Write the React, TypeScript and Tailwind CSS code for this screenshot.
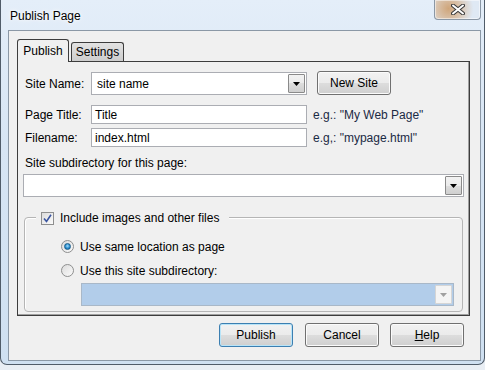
import type { ReactNode } from 'react';

const font = { fontFamily: '"Liberation Sans", Arial, sans-serif' };

function DropArrow({ disabled = false }: { disabled?: boolean }) {
  return (
    <svg width="7" height="4" viewBox="0 0 7 4">
      <path d="M0 0h7L3.5 4z" fill={disabled ? '#a0a0a0' : '#000'} />
    </svg>
  );
}

function Combo({ value, className, disabled = false }: { value?: string; className: string; disabled?: boolean }) {
  return (
    <div
      className={`flex border ${
        disabled ? 'border-[#a9b8c8] bg-[#b2cdea]' : 'border-[#abadb3] bg-white'
      } ${className}`}
    >
      <div className="flex-1 flex items-center pl-[5px] text-[12px] text-black">{value}</div>
      <div
        className={`w-[17px] m-[1px] flex items-center justify-center rounded-[1px] border ${
          disabled
            ? 'border-[#d5d5d5] bg-[#f4f4f4]'
            : 'border-[#8a8a8a] bg-[linear-gradient(to_bottom,#f2f2f2_0%,#ebebeb_50%,#dddddd_50%,#cfcfcf_100%)]'
        }`}
      >
        <DropArrow disabled={disabled} />
      </div>
    </div>
  );
}

function TextInput({ value }: { value: string }) {
  return (
    <div className="w-[216px] h-[19px] border border-[#abadb3] bg-white flex items-center pl-[3px] text-[12px] text-black">
      {value}
    </div>
  );
}

function WinButton({ children, isDefault = false, className = '' }: { children: ReactNode; isDefault?: boolean; className?: string }) {
  return (
    <button
      className={`w-[74px] h-[24px] rounded-[3px] border text-[12px] text-black flex items-center justify-center bg-[linear-gradient(to_bottom,#f2f2f2_0%,#ebebeb_50%,#dddddd_50%,#cfcfcf_100%)] ${
        isDefault ? 'border-[#3c7fb1] shadow-[inset_0_0_0_1px_#b8e4f8]' : 'border-[#707070] shadow-[inset_0_0_0_1px_#fbfbfb]'
      } ${className}`}
    >
      {children}
    </button>
  );
}

function Radio({ checked }: { checked: boolean }) {
  return (
    <div className="w-[13px] h-[13px] rounded-full border border-[#8e8f8f] bg-[linear-gradient(to_bottom_right,#dcdcdc,#fbfbfb)] flex items-center justify-center">
      {checked && (
        <div className="w-[7px] h-[7px] rounded-full border border-[#185d8c] bg-[radial-gradient(circle_at_50%_40%,#a7dcf9_0%,#2a8fd0_55%,#0f5a95_100%)]" />
      )}
    </div>
  );
}

export default function App() {
  return (
    <div className="w-[485px] h-[370px] overflow-hidden bg-[#e9eef4]" style={font}>
      <div className="w-[485px] h-[365px] rounded-b-[7px] border-x border-b border-[#505c69] bg-[linear-gradient(to_bottom,#e4eef9_0%,#d7e5f4_40%,#cfe0f1_100%)] flex flex-col">
        {/* Title bar */}
        <div className="h-[30px] flex items-start justify-between">
          <div className="pl-[9px] pt-[8px] leading-[16px] text-[12px] text-black [text-shadow:0_0_6px_#ffffff,0_0_3px_#ffffff]">
            Publish Page
          </div>
          <div className="mr-[3px] w-[47px] h-[20px] rounded-b-[4px] border border-t-0 border-[#8a97a5] bg-[radial-gradient(circle_at_30%_45%,#cfa57a_0%,#d9c3ad_35%,#dfe9f4_75%)] shadow-[inset_0_0_0_1px_#ffffff80] flex items-center justify-center">
            <svg width="14" height="11" viewBox="0 0 14 11">
              <path d="M2 1.5L12 9.5M12 1.5L2 9.5" stroke="#3a3a3a" strokeWidth="4" strokeLinecap="round" />
              <path d="M2 1.5L12 9.5M12 1.5L2 9.5" stroke="#ffffff" strokeWidth="2" strokeLinecap="round" />
            </svg>
          </div>
        </div>

        {/* Client area */}
        <div className="ml-[7px] w-[473px] h-[331px] border border-[#8b98a6] bg-[#f0f0f0] pl-[8px] pt-[8px] flex flex-col">
          {/* Tabs */}
          <div className="flex items-end">
            <div className="relative z-10 w-[52px] h-[23px] -mb-[1px] rounded-t-[3px] border border-b-0 border-[#3d3d3d] bg-[#f0f0f0] flex items-center justify-center text-[12px] text-black">
              Publish
            </div>
            <div className="ml-[2px] w-[53px] h-[19px] rounded-t-[3px] border border-b-0 border-[#3d3d3d] bg-[linear-gradient(to_bottom,#e2e2e2,#cdcdcd)] flex items-center justify-center text-[12px] text-black">
              Settings
            </div>
          </div>

          {/* Tab panel */}
          <div className="w-[453px] h-[255px] border border-[#3d3d3d] shadow-[inset_-1px_-1px_0_#a0a0a0] bg-[#f0f0f0] flex flex-col">
            <div className="mt-[10px] h-[23px] flex items-center">
              <div className="pl-[7px] w-[73px] text-[12px] text-black">Site Name:</div>
              <Combo value="site name" className="w-[216px] h-[23px]" />
              <WinButton className="ml-[10px] -mt-[1px]">New Site</WinButton>
            </div>

            <div className="mt-[10px] h-[19px] flex items-center">
              <div className="pl-[7px] w-[73px] text-[12px] text-black">Page Title:</div>
              <TextInput value="Title" />
              <div className="ml-[6px] text-[12px] text-[#1b2a44]">e.g.: "My Web Page"</div>
            </div>

            <div className="mt-[4px] h-[19px] flex items-center">
              <div className="pl-[7px] w-[73px] text-[12px] text-black">Filename:</div>
              <TextInput value="index.html" />
              <div className="ml-[6px] text-[12px] text-[#1b2a44]">e.g,: "mypage.html"</div>
            </div>

            <div className="mt-[9px] pl-[7px] leading-[15px] text-[12px] text-black">Site subdirectory for this page:</div>

            <Combo className="ml-[5px] mt-[3px] w-[441px] h-[23px]" />

            {/* Group box */}
            <div className="relative ml-[6px] mt-[20px] w-[439px] h-[95px] rounded-[4px] border border-[#b5b5b5] shadow-[inset_1px_1px_0_#ffffff]">
              <div className="absolute -top-[6px] left-[11px] flex items-center gap-[6px] bg-[#f0f0f0] pl-[5px] pr-[10px] h-[13px]">
                <div className="w-[13px] h-[13px] border border-[#8e8f8f] bg-[linear-gradient(to_bottom_right,#dcdcdc,#fbfbfb)] flex items-center justify-center">
                  <svg width="9" height="9" viewBox="0 0 9 9">
                    <path d="M1 4.5L3.5 7.5L8 0.8" stroke="#3a55a0" strokeWidth="1.6" fill="none" />
                  </svg>
                </div>
                <span className="text-[12px] text-black leading-[13px]">Include images and other files</span>
              </div>

              <div className="pl-[36px] pt-[22px] flex flex-col">
                <div className="h-[13px] flex items-center gap-[6px]">
                  <Radio checked />
                  <span className="text-[12px] text-black">Use same location as page</span>
                </div>
                <div className="mt-[11px] h-[13px] flex items-center gap-[6px]">
                  <Radio checked={false} />
                  <span className="text-[12px] text-black">Use this site subdirectory:</span>
                </div>
                <Combo disabled className="ml-[20px] mt-[6px] w-[373px] h-[23px]" />
              </div>
            </div>
          </div>

          {/* Buttons */}
          <div className="w-[453px] mt-[7px] pr-[6px] flex justify-end">
            <WinButton isDefault>Publish</WinButton>
            <WinButton className="ml-[12px]">Cancel</WinButton>
            <WinButton className="ml-[11px]">
              <span>
                <span className="underline">H</span>elp
              </span>
            </WinButton>
          </div>
        </div>
      </div>
    </div>
  );
}
